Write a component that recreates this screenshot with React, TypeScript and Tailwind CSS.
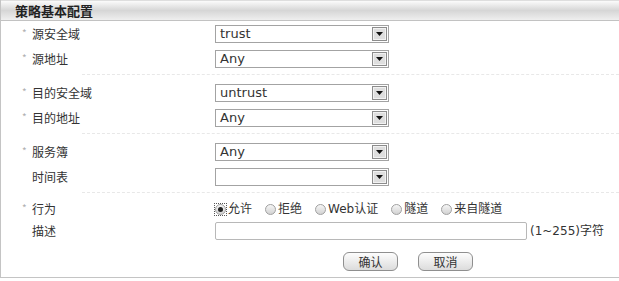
import type { ReactNode } from "react";

const latin = "font-['DejaVu_Sans','Noto_Sans_CJK_SC',sans-serif]";

function Select({ value }: { value: string }) {
  return (
    <div className="flex h-[18px] w-[174px] items-stretch border border-[#a3a3a3] bg-white">
      <div className={`flex-1 pl-[4px] text-[13px] leading-[16px] text-[#333] ${latin}`}>{value}</div>
      <div className="m-[1px] flex w-[15px] items-center justify-center border border-[#8c8c8c] bg-[#dedede] shadow-[inset_0_0_0_1px_#f2f2f2]">
        <svg width="7" height="4" viewBox="0 0 7 4">
          <path d="M0 0h7L3.5 4z" fill="#111" />
        </svg>
      </div>
    </div>
  );
}

function Row({
  req,
  label,
  h = "h-[25px]",
  children,
}: {
  req?: boolean;
  label: string;
  h?: string;
  children: ReactNode;
}) {
  return (
    <div className={`flex items-center ${h}`}>
      <div className="flex w-[214px] items-center pl-[21px] text-[12px] text-[#333]">
        <span className="-mt-[2px] w-[10px] text-[10px] leading-none text-[#b0b0b0]">{req ? "*" : ""}</span>
        <span>{label}</span>
      </div>
      {children}
    </div>
  );
}

function Sep() {
  return <div className="mb-[5px] ml-[81px] mt-[3px] border-t border-dashed border-[#e8e8e8]" />;
}

function Radio({ label, checked }: { label: string; checked?: boolean }) {
  return (
    <label className="flex items-center gap-[2px]">
      <span className={checked ? "outline outline-1 outline-dotted outline-[#555]" : ""}>
        <span className="flex h-[11px] w-[11px] items-center justify-center rounded-full border border-[#a0a0a0] bg-gradient-to-b from-[#f6f6f6] to-[#d2d2d2]">
          {checked && <span className="h-[5px] w-[5px] rounded-full bg-[#222]" />}
        </span>
      </span>
      <span>{label}</span>
    </label>
  );
}

function Button({ children }: { children: ReactNode }) {
  return (
    <button className="h-[19px] w-[55px] rounded-[6px] border border-[#8f8f8f] bg-gradient-to-b from-[#fdfdfd] to-[#dcdcdc] text-[12px] leading-[17px] text-[#333]">
      {children}
    </button>
  );
}

export default function App() {
  return (
    <main className="h-[281px] w-[619px] bg-white font-['Noto_Sans_CJK_SC',sans-serif]">
      <section className="h-[278px] border-b border-l border-[#c4c4c4]">
        <div className="h-[21px] border-b border-t border-[#c2c2c2] border-t-[#dedede] bg-gradient-to-b from-[#fbfbfb] via-[#d6d6d6] to-[#efefef] pl-[14px] text-[13px] font-bold leading-[19px] text-[#222]">
          策略基本配置
        </div>

        <Row req label="源安全域">
          <Select value="trust" />
        </Row>
        <Row req label="源地址">
          <Select value="Any" />
        </Row>
        <Sep />

        <Row req label="目的安全域">
          <Select value="untrust" />
        </Row>
        <Row req label="目的地址">
          <Select value="Any" />
        </Row>
        <Sep />

        <Row req label="服务簿">
          <Select value="Any" />
        </Row>
        <Row label="时间表">
          <Select value="" />
        </Row>
        <Sep />

        <Row req label="行为" h="h-[22px]">
          <div className={`flex items-center gap-[13px] text-[12px] text-[#333] ${latin}`}>
            <Radio label="允许" checked />
            <Radio label="拒绝" />
            <Radio label="Web认证" />
            <Radio label="隧道" />
            <Radio label="来自隧道" />
          </div>
        </Row>
        <Row label="描述" h="h-[22px]">
          <div className="h-[18px] w-[312px] rounded-[2px] border border-[#b8b8b8] bg-white" />
          <span className={`ml-[3px] text-[12px] text-[#333] ${latin}`}>(1~255)字符</span>
        </Row>

        <div className="mt-[10px] flex w-[600px] justify-end gap-[20px] pr-[128px]">
          <Button>确认</Button>
          <Button>取消</Button>
        </div>
      </section>
    </main>
  );
}
